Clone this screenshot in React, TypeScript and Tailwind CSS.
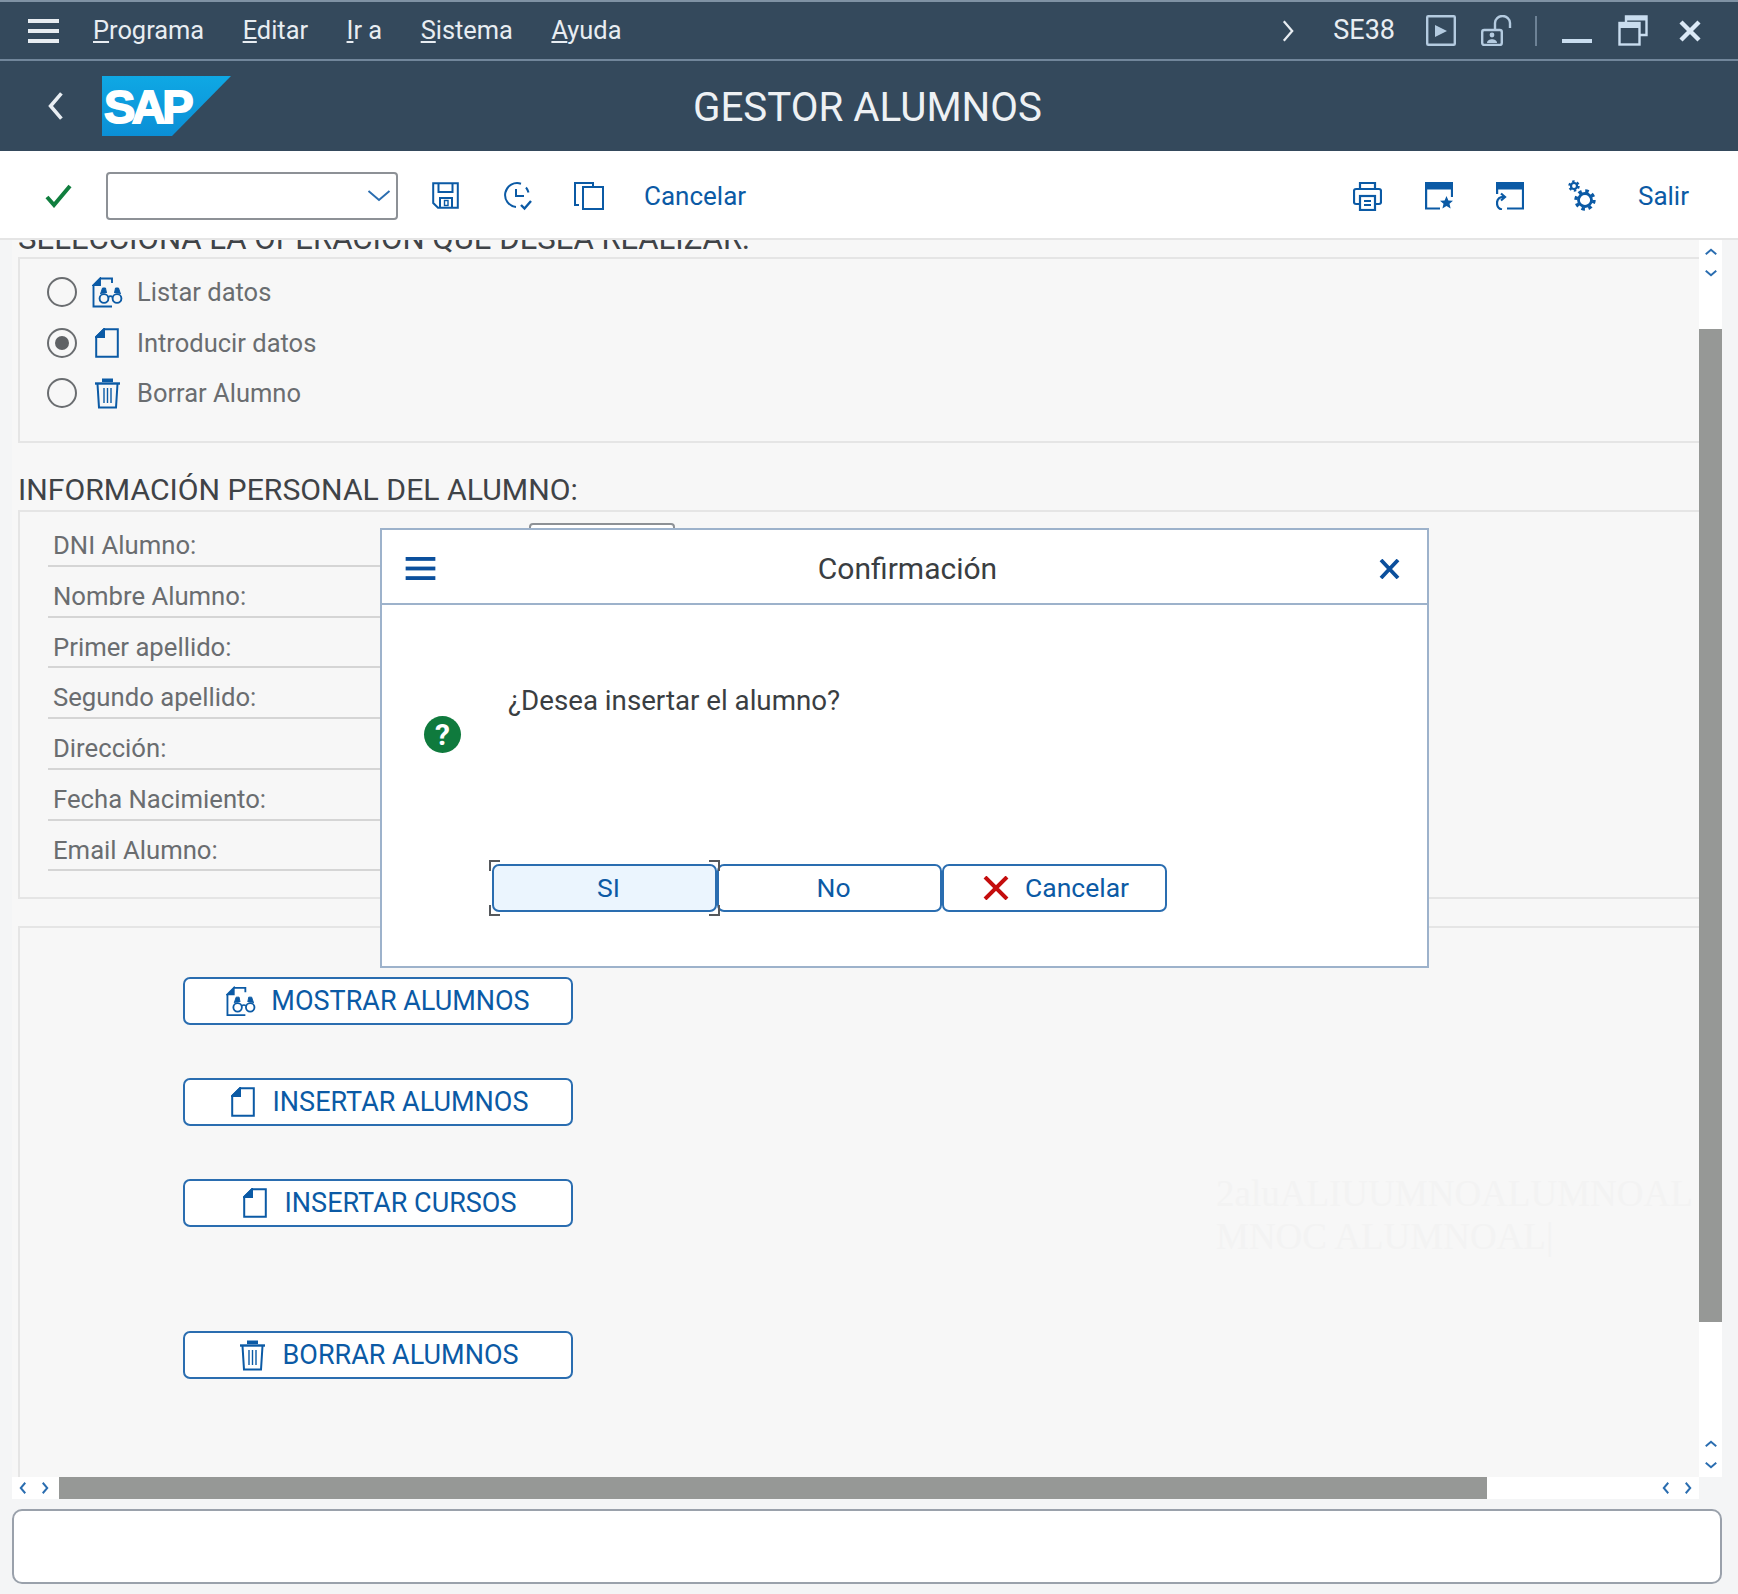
import type { ReactNode } from 'react';

const fieldLabels = ['Nombre Alumno:', 'Primer apellido:', 'Segundo apellido:', 'Dirección:', 'Fecha Nacimiento:', 'Email Alumno:'];

function Hamburger({ className }: { className: string }) {
  return (
    <svg viewBox="0 0 31 24" className={className} fill="currentColor">
      <rect x="0" y="0" width="31" height="4" />
      <rect x="0" y="10" width="31" height="4" />
      <rect x="0" y="20" width="31" height="4" />
    </svg>
  );
}

function Chevron({ dir, className, weight = 2 }: { dir: 'left' | 'right' | 'up' | 'down'; className: string; weight?: number }) {
  const paths = {
    left: 'M8 1 2 8l6 7',
    right: 'M2 1l6 7-6 7',
    up: 'M1 8l7-6 7 6',
    down: 'M1 2l7 6 7-6',
  };
  const box = dir === 'left' || dir === 'right' ? '0 0 10 16' : '0 0 16 10';
  return (
    <svg viewBox={box} className={className} fill="none" stroke="currentColor" strokeWidth={weight}>
      <path d={paths[dir]} />
    </svg>
  );
}

function DocIcon({ className }: { className: string }) {
  return (
    <svg viewBox="0 0 24 30" className={className} fill="none" stroke="currentColor" strokeWidth="2">
      <path d="M9 1.2H22.8V28.8H1.2V9Z" />
      <path d="M9 1.2V9H1.2Z" fill="currentColor" />
    </svg>
  );
}

function BinocularsDoc({ className }: { className: string }) {
  return (
    <svg viewBox="0 0 31 31" className={className} fill="none" stroke="currentColor" strokeWidth="1.9">
      <path d="M8 1.5H20V6M1.5 8V29.5H20" />
      <path d="M8 1.5V8H1.5Z" fill="currentColor" />
      <circle cx="12" cy="21.5" r="4.4" />
      <circle cx="25" cy="21.5" r="4.4" />
      <path d="M16.5 20c1-1 3-1 4 0" />
      <path d="M8.5 17l2-6h3l1 5M22.5 16l1-5h3l2 6" fill="currentColor" strokeWidth="1" />
    </svg>
  );
}

function TrashIcon({ className }: { className: string }) {
  return (
    <svg viewBox="0 0 27 31" className={className} fill="none" stroke="currentColor" strokeWidth="2">
      <path d="M1 5.5H26" strokeWidth="2.4" />
      <path d="M9 4V1.5H18V4" fill="currentColor" />
      <path d="M3.5 6 5 29.5H22L23.5 6" />
      <path d="M10 10V25M13.5 10V25M17 10V25" strokeWidth="1.4" />
    </svg>
  );
}

function Radio({ checked }: { checked?: boolean }) {
  return (
    <span className="flex h-[30px] w-[30px] items-center justify-center rounded-full border-2 border-[#6a6d70] bg-[#f7f7f7]">
      {checked && <span className="h-[14px] w-[14px] rounded-full bg-[#5f6265]" />}
    </span>
  );
}

function OptionRow({ icon, label, checked }: { icon: ReactNode; label: string; checked?: boolean }) {
  return (
    <div className="flex h-[50.5px] items-center">
      <Radio checked={checked} />
      <span className="ml-[14px] flex w-[32px] justify-center text-[#0b5aa5]">{icon}</span>
      <span className="ml-[14px] text-[25.5px] text-[#6a6d70]">{label}</span>
    </div>
  );
}

function ActionButton({ icon, label, className }: { icon: ReactNode; label: string; className: string }) {
  return (
    <button className={`flex h-[48px] w-[390px] items-center justify-center rounded-[7px] border-2 border-[#2a6db0] bg-white text-[27px] text-[#0b5aa5] ${className}`}>
      <span className="flex w-[30px] justify-center">{icon}</span>
      <span className="ml-[15px]">{label}</span>
    </button>
  );
}

function Bracket({ className }: { className: string }) {
  return <span className={`absolute h-[11px] w-[11px] border-[#55585c] ${className}`} />;
}

export default function App() {
  return (
    <div className="relative flex h-[1594px] w-[1738px] flex-col overflow-hidden bg-[#f4f5f6] font-['Roboto',sans-serif]">
      <div className="flex h-[61px] items-center border-t-2 border-b-2 border-t-[#7f92a4] border-b-[#71869b] bg-[#34495c] text-[#e8edf2]">
        <Hamburger className="ml-[28px] h-[24px] w-[31px]" />
        <div className="ml-[34px] flex gap-[38.5px] text-[25.4px]">
          <span><span className="underline">P</span>rograma</span>
          <span><span className="underline">E</span>ditar</span>
          <span><span className="underline">I</span>r a</span>
          <span><span className="underline">S</span>istema</span>
          <span><span className="underline">A</span>yuda</span>
        </div>
        <div className="ml-auto flex items-center pr-[37px]">
          <Chevron dir="right" className="h-[24px] w-[14px]" weight={1.6} />
          <span className="ml-[38px] text-[27px]">SE38</span>
          <svg viewBox="0 0 30 31" className="ml-[31px] h-[31px] w-[30px] text-[#b4cbe0]" fill="none" stroke="currentColor" strokeWidth="2.4">
            <rect x="1.2" y="1.2" width="27.6" height="28.6" rx="1" />
            <path d="M9 10 21 16 9 22Z" fill="currentColor" stroke="none" />
          </svg>
          <svg viewBox="0 0 31 31" className="ml-[25px] h-[31px] w-[31px] text-[#b4cbe0]" fill="none" stroke="currentColor" strokeWidth="2.4">
            <rect x="1.2" y="15" width="19.6" height="15" rx="2" />
            <path d="M14 15V8a7.5 7 0 0 1 15 0v5" />
            <circle cx="11" cy="20" r="2.4" fill="currentColor" stroke="none" />
            <path d="M6 28c0-5 10-5 10 0Z" fill="currentColor" stroke="none" />
          </svg>
          <span className="ml-[23px] h-[30px] w-[2px] bg-[#6d8296]" />
          <span className="ml-[25px] mt-[20px] h-[4px] w-[30px] bg-[#c9ddef]" />
          <svg viewBox="0 0 30 31" className="ml-[26px] h-[31px] w-[30px] text-[#c9ddef]" fill="none" stroke="currentColor" strokeWidth="2.4">
            <path d="M8 8V1.5H28.5V20H22" />
            <path d="M8 3.5H28" strokeWidth="4" />
            <rect x="1.5" y="8" width="20" height="21.5" />
            <path d="M1.5 11H21.5" strokeWidth="4" />
          </svg>
          <svg viewBox="0 0 22 22" className="ml-[31px] h-[22px] w-[22px] text-[#dbe9f6]" fill="none" stroke="currentColor" strokeWidth="4.4">
            <path d="M2 2l18 18M20 2 2 20" />
          </svg>
        </div>
      </div>

      <div className="flex h-[90px] items-center bg-[#34495c]">
        <Chevron dir="left" className="ml-[47px] h-[32px] w-[18px] text-[#e8edf2]" />
        <svg viewBox="0 0 129 60" className="ml-[37px] h-[60px] w-[129px]">
          <defs>
            <linearGradient id="sapBlue" x1="0" y1="0" x2="0" y2="1">
              <stop offset="0" stopColor="#0fa8e4" />
              <stop offset="1" stopColor="#0b8fd6" />
            </linearGradient>
          </defs>
          <path d="M0 0H129L70 60H0Z" fill="url(#sapBlue)" />
          <text x="2" y="47" fill="#fff" stroke="#fff" strokeWidth="1.8" fontFamily="Liberation Sans" fontWeight="700" fontSize="47" letterSpacing="-3.5">SAP</text>
        </svg>
        <h1 className="ml-[462px] pt-[5px] text-[40.3px] font-normal whitespace-nowrap text-[#eef1f4]">GESTOR ALUMNOS</h1>
      </div>

      <div className="flex h-[89px] items-center border-b-2 border-[#e5e5e5] bg-white pt-[2px] pr-[49px] pl-[45px] text-[#0b5aa5]">
        <svg viewBox="0 0 27 24" className="h-[24px] w-[27px]" fill="none" stroke="#107e3e" strokeWidth="4">
          <path d="M2 13l7 8L25 2" />
        </svg>
        <div className="ml-[34px] flex h-[48px] w-[292px] items-center justify-end rounded-[4px] border-2 border-[#8d9196] bg-white pr-[5px]">
          <Chevron dir="down" className="h-[15px] w-[24px] text-[#2a6db0]" weight={1.3} />
        </div>
        <svg viewBox="0 0 27 27" className="ml-[34px] h-[27px] w-[27px]" fill="none" stroke="currentColor" strokeWidth="2">
          <path d="M1.2 1.2H25.8V25.8H6L1.2 21Z" />
          <path d="M6.5 1.5V10H20.5V1.5M8 25.5V16H20V25.5" />
          <rect x="12.5" y="18.5" width="3.5" height="5" strokeWidth="1.4" />
        </svg>
        <svg viewBox="0 0 30 30" className="ml-[44px] h-[30px] w-[30px]" fill="none" stroke="currentColor" strokeWidth="2">
          <path d="M18 2.7A12 12 0 1 0 13 26" />
          <path d="M23 6.5a12 12 0 0 1 2.5 5" />
          <path d="M13 8v7h8" />
          <path d="M18 24l3.5 3.5L28 20" strokeWidth="2.4" />
        </svg>
        <svg viewBox="0 0 30 28" className="ml-[41px] h-[28px] w-[30px]" fill="none" stroke="currentColor" strokeWidth="2">
          <path d="M5 23H1V1H19V5" />
          <rect x="9" y="5" width="20" height="22" />
        </svg>
        <span className="ml-[40px] pt-[2px] text-[26px]">Cancelar</span>
        <div className="ml-auto flex items-center">
          <svg viewBox="0 0 29 30" className="h-[30px] w-[29px]" fill="none" stroke="currentColor" strokeWidth="2.2">
            <path d="M7 8V2h15v6" />
            <path d="M6 23H3a2 2 0 0 1-2-2V10a2 2 0 0 1 2-2h23a2 2 0 0 1 2 2v11a2 2 0 0 1-2 2h-3" />
            <rect x="7" y="15" width="15" height="14" />
            <path d="M11 20h7M11 24h7" />
          </svg>
          <svg viewBox="0 0 28 28" className="ml-[43px] h-[28px] w-[28px]" fill="none" stroke="currentColor" strokeWidth="2.2">
            <path d="M15 26.5H1.1V1H27V15" />
            <path d="M1 4H27" strokeWidth="7" />
            <path d="M21.5 14l1.9 4.4 4.6.4-3.5 3 1.1 4.7-4.1-2.5-4.1 2.5 1.1-4.7-3.5-3 4.6-.4Z" fill="currentColor" stroke="none" />
          </svg>
          <svg viewBox="0 0 28 28" className="ml-[43px] h-[28px] w-[28px]" fill="none" stroke="currentColor" strokeWidth="2.2">
            <path d="M1.1 12V1H27V26.5H11" />
            <path d="M1 4H27" strokeWidth="7" />
            <path d="M9 15c-5-1-8 2-8 6s2 6 5 6.500M5 11.500l4 3.500-4 3.500" />
          </svg>
          <svg viewBox="0 0 28 31" className="ml-[44px] h-[31px] w-[28px]" fill="none" stroke="currentColor">
            <circle cx="6" cy="6" r="3" strokeWidth="2.2" />
            <circle cx="6" cy="6" r="4.5" strokeWidth="2.5" strokeDasharray="2.36 2.36" />
            <circle cx="17" cy="20" r="6.5" strokeWidth="2.8" />
            <circle cx="17" cy="20" r="9" strokeWidth="3.4" strokeDasharray="3.53 3.53" />
          </svg>
          <span className="ml-[42px] pt-[2px] text-[26px]">Salir</span>
        </div>
      </div>

      <div className="flex h-[1237px] pl-[12px] pr-[16px]">
        <div className="min-w-0 flex-1 overflow-hidden bg-[#f7f7f7] pl-[6px]">
          <div className="mt-[-20px]">
            <h2 className="mb-[3px] h-[34px] text-[31.1px] leading-[38px] font-normal whitespace-nowrap text-[#3f4347]">SELECCIONA LA OPERACIÓN QUE DESEA REALIZAR:</h2>
            <div className="h-[186px] border-y-2 border-l-2 border-[#e5e5e5] pt-[8px] pl-[27px]">
              <OptionRow icon={<BinocularsDoc className="h-[31px] w-[31px]" />} label="Listar datos" />
              <OptionRow icon={<DocIcon className="h-[30px] w-[24px]" />} label="Introducir datos" checked />
              <OptionRow icon={<TrashIcon className="h-[31px] w-[27px]" />} label="Borrar Alumno" />
            </div>

            <h2 className="mt-[30px] mb-[3px] h-[34px] text-[30.2px] leading-[34px] font-normal whitespace-nowrap text-[#3f4347]">INFORMACIÓN PERSONAL DEL ALUMNO:</h2>
            <div className="h-[389px] border-y-2 border-l-2 border-[#e5e5e5] pt-[4px] pl-[28px]">
              <div className="flex h-[50.75px] w-[640px] border-b-2 border-[#d5d5d5] pl-[5px] text-[25.7px] text-[#6a6d70]">
                <span className="w-[476px] pt-[10px]">DNI Alumno:</span>
                <span className="mt-[7px] h-[34px] w-[146px] rounded-[4px] border-2 border-[#8d9196] bg-white" />
              </div>
              {fieldLabels.map((label) => (
                <div key={label} className="h-[50.75px] w-[640px] border-b-2 border-[#d5d5d5] pt-[10px] pl-[5px] text-[25.7px] text-[#6a6d70]">
                  {label}
                </div>
              ))}
            </div>

            <div className="mt-[27px] flex h-[560px] border-t-2 border-l-2 border-[#e5e5e5] pt-[49px] pl-[163px]">
              <div className="w-[390px] shrink-0">
                <ActionButton icon={<BinocularsDoc className="h-[31px] w-[31px]" />} label="MOSTRAR ALUMNOS" className="" />
                <ActionButton icon={<DocIcon className="h-[30px] w-[24px]" />} label="INSERTAR ALUMNOS" className="mt-[53px]" />
                <ActionButton icon={<DocIcon className="h-[30px] w-[24px]" />} label="INSERTAR CURSOS" className="mt-[53px]" />
                <ActionButton icon={<TrashIcon className="h-[31px] w-[27px]" />} label="BORRAR ALUMNOS" className="mt-[104px]" />
              </div>
              <div className="ml-[643px] mt-[195px] font-['Liberation_Serif',serif] text-[37px] leading-[43px] whitespace-nowrap text-[#f3f3f3]">
                2aluALIUUMNOALUMNOAL
                <br />
                MNOC ALUMNOAL|
              </div>
            </div>
          </div>
        </div>
        <div className="flex w-[23px] shrink-0 flex-col items-center bg-white text-[#2a6db0]">
          <Chevron dir="up" className="mt-[8px] h-[8px] w-[12px]" weight={2.6} />
          <Chevron dir="down" className="mt-[13px] h-[8px] w-[12px]" weight={2.6} />
          <div className="mt-[52px] h-[993px] w-full bg-[#969896]" />
          <Chevron dir="up" className="mt-[118px] h-[8px] w-[12px]" weight={2.6} />
          <Chevron dir="down" className="mt-[13px] h-[8px] w-[12px]" weight={2.6} />
        </div>
      </div>

      <div className="ml-[12px] flex h-[22px] w-[1687px] items-center bg-white text-[#2a6db0]">
        <Chevron dir="left" className="ml-[7px] h-[12px] w-[8px]" weight={2.6} />
        <Chevron dir="right" className="ml-[14px] h-[12px] w-[8px]" weight={2.6} />
        <div className="ml-[10px] h-full w-[1428px] bg-[#969896]" />
        <Chevron dir="left" className="ml-[175px] h-[12px] w-[8px]" weight={2.6} />
        <Chevron dir="right" className="ml-[14px] h-[12px] w-[8px]" weight={2.6} />
      </div>

      <div className="mt-[10px] mr-[16px] ml-[12px] h-[75px] rounded-[10px] border-2 border-[#9aa1ab] bg-white" />

      <div className="absolute top-[528px] left-[380px] flex h-[440px] w-[1049px] flex-col border-2 border-[#9db2cb] bg-white">
        <div className="flex h-[75px] shrink-0 items-center border-b-2 border-[#9db2cb] text-[#0b4f9c]">
          <Hamburger className="mt-[4px] ml-[23px] h-[23px] w-[31px]" />
          <span className="flex-1 pt-[4px] text-center text-[30px] text-[#3a3e42]">Confirmación</span>
          <svg viewBox="0 0 21 20" className="mt-[4px] mr-[27px] h-[20px] w-[21px]" fill="none" stroke="currentColor" strokeWidth="3.8">
            <path d="M2 1l17 18M19 1 2 19" />
          </svg>
        </div>
        <div className="flex h-[259px] shrink-0 items-start">
          <span className="mt-[111px] ml-[42px] flex h-[37px] w-[37px] items-center justify-center rounded-full bg-[#0f7a3d] text-[30px] leading-none font-bold text-white">?</span>
          <span className="mt-[79px] ml-[47px] text-[27.7px] leading-[34px] text-[#3a3e42]">¿Desea insertar el alumno?</span>
        </div>
        <div className="flex pl-[110px] text-[26.5px] text-[#0b5aa5]">
          <div className="relative flex h-[48px] w-[225px] items-center justify-center rounded-[7px] border-2 border-[#2a6db0] bg-[#ebf5fe] pl-[8px]">
            SI
            <Bracket className="top-[-6px] left-[-5px] border-t-2 border-l-2" />
            <Bracket className="top-[-6px] right-[-5px] border-t-2 border-r-2" />
            <Bracket className="bottom-[-6px] left-[-5px] border-b-2 border-l-2" />
            <Bracket className="right-[-5px] bottom-[-6px] border-r-2 border-b-2" />
          </div>
          <div className="flex h-[48px] w-[225px] items-center justify-center rounded-[7px] border-2 border-[#2a6db0] bg-white pl-[8px]">No</div>
          <div className="flex h-[48px] w-[225px] items-center justify-center rounded-[7px] border-2 border-[#2a6db0] bg-white pl-[3px]">
            <svg viewBox="0 0 26 24" className="h-[24px] w-[26px]" fill="none" stroke="#c40d0d" strokeWidth="4">
              <path d="M2 1l22 22M24 1 2 23" />
            </svg>
            <span className="ml-[16px]">Cancelar</span>
          </div>
        </div>
      </div>
    </div>
  );
}
